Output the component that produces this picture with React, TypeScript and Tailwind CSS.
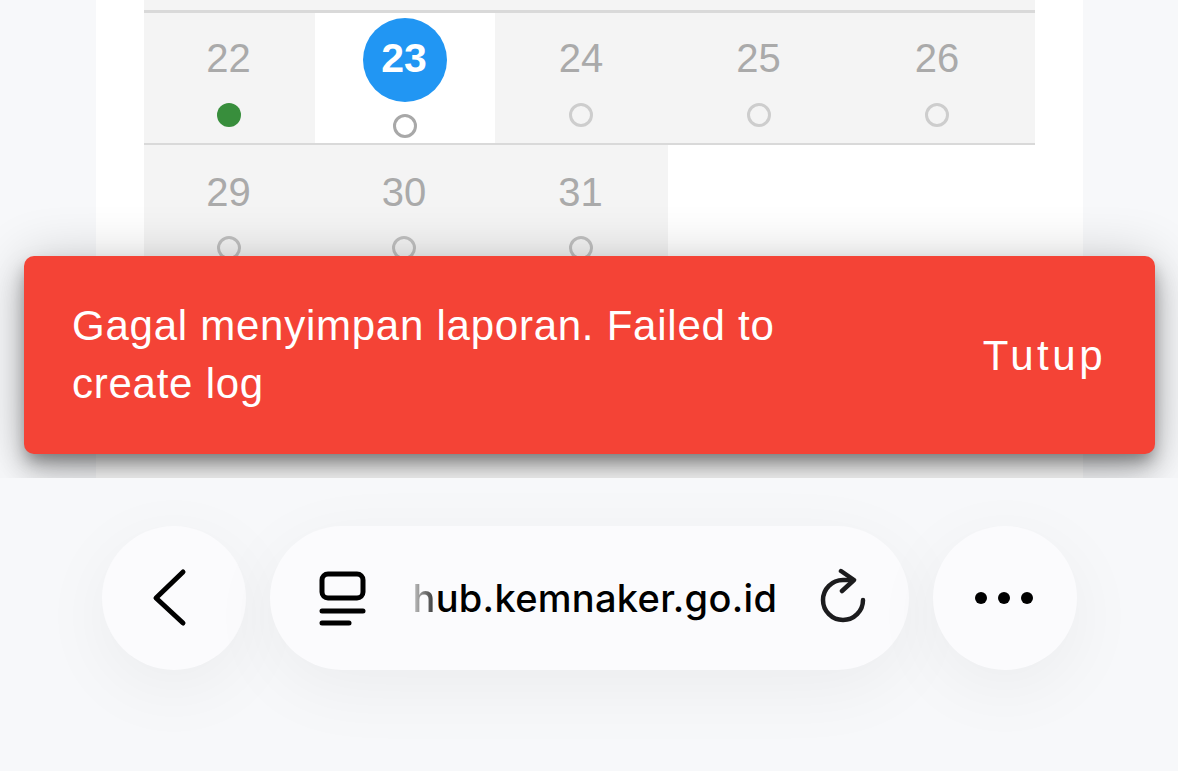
import React from "react";

type Day = { label: string; width: string; dot?: "done" | "empty"; today?: boolean };

const rowOne: Day[] = [
  { label: "22", width: "w-[171px]", dot: "done" },
  { label: "23", width: "w-[180px]", today: true },
  { label: "24", width: "w-[174px]" },
  { label: "25", width: "w-[181px]" },
  { label: "26", width: "w-[176px]" },
];

const rowTwo: Day[] = [
  { label: "29", width: "w-[171px]" },
  { label: "30", width: "w-[180px]" },
  { label: "31", width: "w-[173px]" },
];

const DayCell = ({ day, lower }: { day: Day; lower?: boolean }) => {
  if (day.today) {
    return (
      <div className={`${day.width} h-full bg-white flex flex-col items-center pt-[5px] shrink-0`}>
        <div className="w-[84px] h-[84px] rounded-full bg-[#2196f3] flex items-center justify-center pb-[3px] pr-[2px] text-white text-[41px] font-bold leading-none">
          {day.label}
        </div>
        <div className="mt-[12px] w-[24px] h-[24px] rounded-full border-[3px] border-[#a8a8a8] bg-white" />
      </div>
    );
  }
  return (
    <div className={`${day.width} h-full flex flex-col items-center pr-[2px] shrink-0 ${lower ? "pt-[11px]" : "pt-[9px]"}`}>
      <div className="h-[72px] flex items-center text-[40px] leading-none text-[#aaaaaa]">{day.label}</div>
      {day.dot === "done" ? (
        <div className="mt-[9px] w-[24px] h-[24px] rounded-full bg-[#388e3c]" />
      ) : (
        <div className={`w-[24px] h-[24px] rounded-full border-[3px] ${lower ? "mt-[8px] border-[#c0c0c0]" : "mt-[9px] border-[#cdcdcd]"}`} />
      )}
    </div>
  );
};

const Calendar = () => (
  <div className="relative h-[478px] overflow-hidden bg-[#f7f8fa] shrink-0">
    <div className="mx-[96px] w-[987px] h-full bg-white px-[48px]">
      <div className="w-[891px] h-[10px] bg-[#f4f4f4]" />
      <div className="w-[891px] h-[3px] bg-[#d9d9d9]" />
      <div className="w-[891px] h-[130px] bg-[#f4f4f4] flex">
        {rowOne.map((d) => (
          <DayCell key={d.label} day={d} />
        ))}
      </div>
      <div className="w-[891px] h-[2px] bg-[#d9d9d9]" />
      <div className="w-[524px] h-[130px] bg-[#f4f4f4] flex">
        {rowTwo.map((d) => (
          <DayCell key={d.label} day={d} lower />
        ))}
      </div>
    </div>

    <div className="absolute left-[24px] top-[256px] w-[1131px] h-[198px] rounded-[10px] bg-[#f44336] text-white flex items-center justify-between pl-[48px] pr-[49px] shadow-[0_9px_15px_-3px_rgba(0,0,0,0.32),0_18px_30px_0_rgba(0,0,0,0.22),0_3px_54px_0_rgba(0,0,0,0.2)]">
      <p className="w-[740px] text-[42px] leading-[58px] tracking-[0.75px]">
        Gagal menyimpan laporan. Failed to create log
      </p>
      <span className="text-[42px] leading-[58px] tracking-[3.5px] mt-[2px]">Tutup</span>
    </div>
  </div>
);

const BrowserBar = () => (
  <div className="flex-1 bg-[#f7f8fa] pt-[48px] flex justify-center gap-[24px] font-['Inter',sans-serif]">
    <button className="w-[144px] h-[144px] rounded-full bg-[#fbfbfd] flex items-center justify-center shadow-[0_18px_72px_rgba(0,0,0,0.05)]">
      <svg width="144" height="144" viewBox="0 0 144 144" fill="none" stroke="#000" strokeWidth="5" strokeLinecap="round" strokeLinejoin="round">
        <path d="M81 46 L54 72 L81 97" />
      </svg>
    </button>

    <div className="w-[639px] h-[144px] rounded-full bg-[#fbfbfd] flex items-center pl-[48px] pr-[40px] shadow-[0_18px_72px_rgba(0,0,0,0.05)]">
      <svg width="48" height="60" viewBox="0 0 48 60" fill="none" stroke="#000" strokeWidth="5" strokeLinecap="round" className="shrink-0">
        <rect x="4" y="6" width="41" height="24" rx="6" />
        <path d="M4 43 H45" />
        <path d="M4 55 H31" />
      </svg>
      <span className="ml-[47px] text-[38px] leading-none font-medium tracking-[0.3px] text-black whitespace-nowrap">
        <span className="bg-gradient-to-r from-[#c4c4c4] to-[#333333] bg-clip-text text-transparent">h</span>
        ub.kemnaker.go.id
      </span>
      <svg width="50" height="60" viewBox="0 0 50 60" fill="none" stroke="#1c1c1e" strokeWidth="4.5" strokeLinecap="round" strokeLinejoin="round" className="ml-auto shrink-0">
        <path d="M44 32 A20 20 0 1 1 24 12 L34 12" />
        <path d="M22 3 L35 12 L23 23" />
      </svg>
    </div>

    <button className="w-[144px] h-[144px] rounded-full bg-[#fbfbfd] flex items-center justify-center pr-[2px] shadow-[0_18px_72px_rgba(0,0,0,0.05)]">
      <svg width="60" height="14" viewBox="0 0 60 14" fill="#000">
        <circle cx="7" cy="7" r="6" />
        <circle cx="30" cy="7" r="6" />
        <circle cx="53" cy="7" r="6" />
      </svg>
    </button>
  </div>
);

export default function App() {
  return (
    <div className="w-[1178px] h-[771px] overflow-hidden flex flex-col bg-[#f7f8fa] font-['Liberation_Sans',Arial,sans-serif]">
      <Calendar />
      <BrowserBar />
    </div>
  );
}
